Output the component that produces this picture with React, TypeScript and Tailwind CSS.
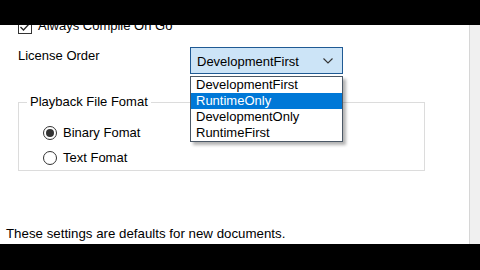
import React from 'react';

const options = ['DevelopmentFirst', 'RuntimeOnly', 'DevelopmentOnly', 'RuntimeFirst'];

const Radio: React.FC<{ checked?: boolean; label: string }> = ({ checked, label }) => (
  <div className="flex items-center h-[16px]">
    <span className="w-[14px] h-[14px] rounded-full border border-[#333] bg-white flex items-center justify-center">
      {checked && <span className="w-[8px] h-[8px] rounded-full bg-[#333]" />}
    </span>
    <span className="ml-[6px]">{label}</span>
  </div>
);

const App: React.FC = () => {
  const selected = 'DevelopmentFirst';
  const highlighted = 'RuntimeOnly';

  return (
    <div className="w-[480px] h-[270px] bg-black flex flex-col overflow-hidden font-['Liberation_Sans',Arial,sans-serif] text-[13px] leading-[16px] text-black">
      <div className="h-[25px] shrink-0" />

      <div className="h-[219px] shrink-0 flex">
        <div className="flex-1 bg-white relative overflow-hidden flex flex-col">
          {/* checkbox row, top is cut off by the bar */}
          <div className="flex items-start pl-[18px] mt-[-7px]">
            <span className="mt-[2px] w-[14px] h-[14px] border border-[#333] bg-white flex items-center justify-center">
              <svg width="12" height="12" viewBox="0 0 12 12">
                <path d="M1.5 6 L4.5 9 L10.5 2.5" fill="none" stroke="#222" strokeWidth="1.3" />
              </svg>
            </span>
            <span className="ml-[6px]">Always Compile On Go</span>
          </div>

          {/* license order */}
          <div className="flex items-start mt-[13px]">
            <div className="w-[190px] pl-[18px] mt-[1px]">License Order</div>
            <div className="relative">
              <div className="w-[153px] h-[27px] border border-[#1f5a94] bg-[#cce4f7] flex items-start justify-between pl-[6px] pr-[9px] pt-[6px]">
                <span>{selected}</span>
                <svg width="10" height="6" viewBox="0 0 10 6" className="mt-[4px]">
                  <path d="M0.5 0.5 L5 5 L9.5 0.5" fill="none" stroke="#333" strokeWidth="1.1" />
                </svg>
              </div>
              <ul className="absolute left-0 top-[29px] z-10 w-[153px] border border-[#4b5866] bg-white shadow-[3px_3px_3px_rgba(0,0,0,0.3)]">
                {options.map((o) => (
                  <li
                    key={o}
                    className={`h-[16px] pl-[5px] ${o === highlighted ? 'bg-[#0078d7] text-white' : ''}`}
                  >
                    {o}
                  </li>
                ))}
              </ul>
            </div>
          </div>

          {/* playback group box */}
          <fieldset className="ml-[18px] w-[407px] mt-[20px] border border-[#dcdcdc]">
            <legend className="ml-[8px] px-[3px]">Playback File Fomat</legend>
            <div className="flex flex-col gap-[9px] pl-[24px] pt-[15px] pb-[4px]">
              <Radio checked label="Binary Fomat" />
              <Radio label="Text Fomat" />
            </div>
          </fieldset>

          <div className="mt-auto pl-[6px] pb-[2px] text-[13.3px]">These settings are defaults for new documents.</div>
        </div>
        <div className="w-px bg-[#d6d6d6]" />
        <div className="w-[10px] bg-[#f0f0f0]" />
      </div>

      <div className="flex-1" />
    </div>
  );
};

export default App;
